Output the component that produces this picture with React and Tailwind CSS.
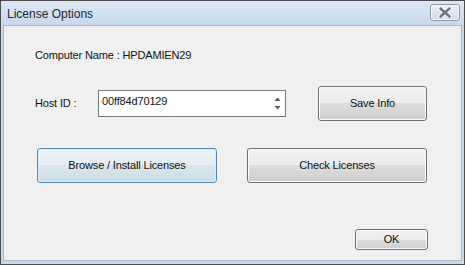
import React from 'react'

const btn =
  'flex items-center justify-center rounded-[3px] border border-[#707070] shadow-[inset_0_0_0_1px_#fcfcfc] bg-[linear-gradient(#f2f2f2_0%,#ebebeb_50%,#dddddd_50%,#cfcfcf_100%)] text-[11px] text-[#111]'

function Spin() {
  return (
    <div className="flex flex-col items-center justify-between w-[16px] h-full py-[6px]">
      <svg width="7" height="4" viewBox="0 0 7 4">
        <path d="M3.5 0.5 L6.5 4 L0.5 4 Z" fill="#5a5a5a" />
      </svg>
      <svg width="7" height="4" viewBox="0 0 7 4">
        <path d="M0.5 0 L6.5 0 L3.5 3.5 Z" fill="#5a5a5a" />
      </svg>
    </div>
  )
}

export default function App() {
  return (
    <div
      className="w-[465px] h-[265px] flex flex-col border border-[#4d4d4d] bg-[#c9d9ec] overflow-hidden"
      style={{ fontFamily: '"Liberation Sans", Arial, sans-serif' }}
    >
      {/* barre de titre */}
      <div className="h-[24px] shrink-0 flex items-center justify-between pl-[6px] pr-[4px] bg-[linear-gradient(#dde7f3,#c8d8eb)]">
        <span className="text-[12px] text-[#1d2733] pt-[1px]">License Options</span>
        <div className="w-[30px] h-[17px] mt-[-1px] rounded-[3px] border border-[#8c98a8] bg-[linear-gradient(#eef2f8_0%,#dfe6ef_50%,#cfd9e5_100%)] shadow-[inset_0_0_0_1px_#f6f8fb] flex items-center justify-center">
          <svg width="14" height="11" viewBox="0 0 14 11">
            <path d="M2.5 1.5 L11.5 9.5 M11.5 1.5 L2.5 9.5" stroke="#ffffff" strokeWidth="4.4" strokeLinecap="round" />
            <path d="M2.5 1.5 L11.5 9.5 M11.5 1.5 L2.5 9.5" stroke="#6d7884" strokeWidth="2.6" strokeLinecap="round" />
          </svg>
        </div>
      </div>

      {/* zone client */}
      <div className="flex-1 mx-[2px] mb-[3px] border border-[#a9b8c9] bg-[#f0f0f0] flex flex-col pl-[31px] pr-[33px] text-[11px] text-[#111] tracking-[-0.15px]">
        <div className="mt-[23px] h-[13px] leading-[13px]">Computer Name : HPDAMIEN29</div>

        <div className="mt-[24px] flex items-center h-[35px]">
          <span className="w-[63px]">Host ID :</span>
          <div className="w-[188px] h-[27px] border border-[#7a7a7a] bg-white flex justify-between">
            <span className="pl-[3px] pt-[4px] leading-[13px]">00ff84d70129</span>
            <Spin />
          </div>
          <div className={btn + ' ml-[32px] w-[109px] h-[35px]'}>Save Info</div>
        </div>

        <div className="mt-[27px] flex h-[35px] pl-[2px]">
          <div className="w-[180px] h-[35px] flex items-center justify-center rounded-[3px] border border-[#4f8ab8] shadow-[inset_0_0_0_1px_#d5eefc] bg-[linear-gradient(#eef4f7_0%,#e4eef3_50%,#d8e5ec_50%,#cddde6_100%)]">
            Browse / Install Licenses
          </div>
          <div className={btn + ' ml-[30px] w-[180px] h-[35px]'}>Check Licenses</div>
        </div>

        <div className="mt-[46px] flex justify-end">
          <div className={btn + ' w-[73px] h-[21px]'}>OK</div>
        </div>
      </div>
    </div>
  )
}
